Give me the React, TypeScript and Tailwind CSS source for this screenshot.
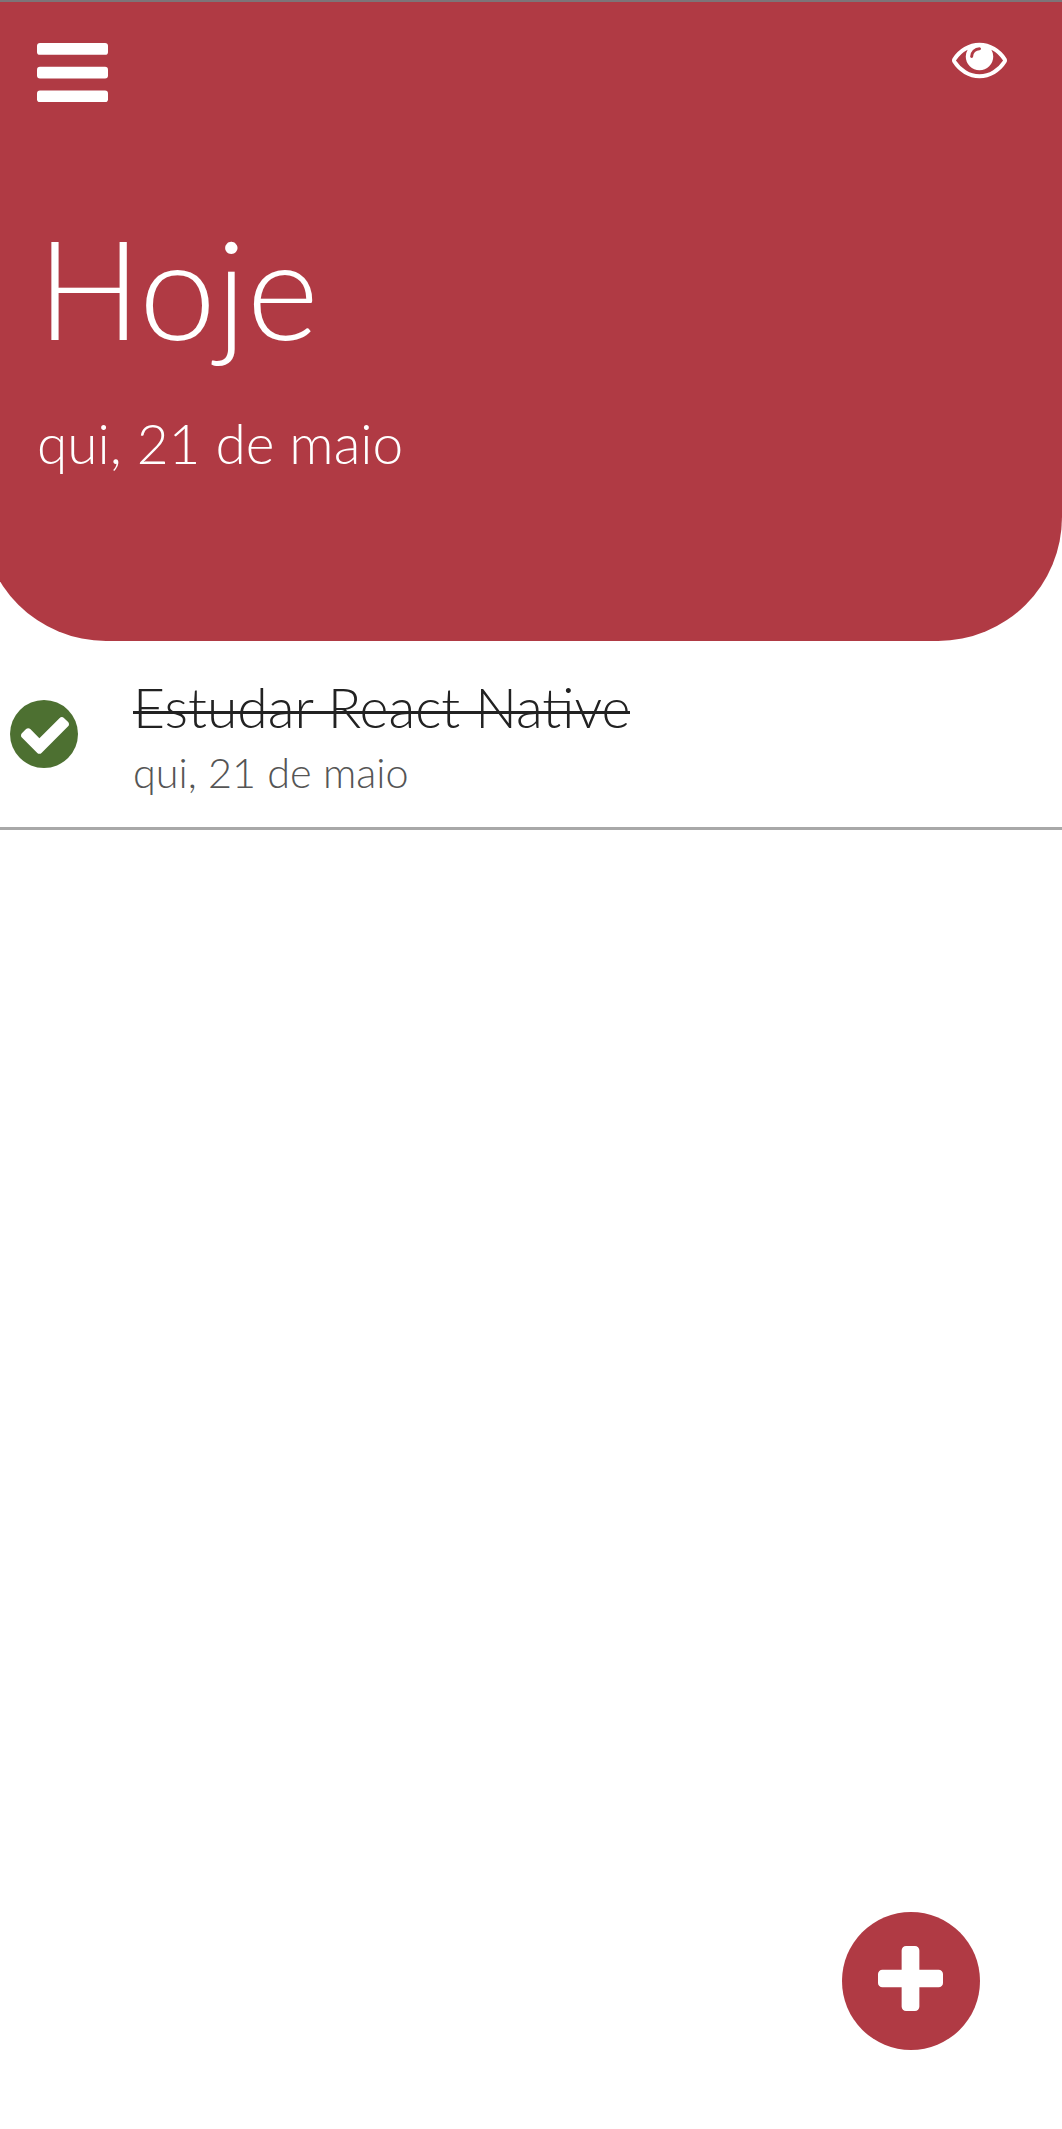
import React from "react";

function Bars() {
  return (
    <svg className="h-[59.25px] w-[71px]" viewBox="128 256 1536 1280" preserveAspectRatio="none" fill="currentColor">
      <rect x="128" y="256" width="1536" height="256" rx="64" />
      <rect x="128" y="768" width="1536" height="256" rx="64" />
      <rect x="128" y="1280" width="1536" height="256" rx="64" />
    </svg>
  );
}

function Eye() {
  return (
    <svg className="size-[55px]" viewBox="0 0 1792 1792" fill="currentColor">
      <path d="M1664 960q-152-236-381-353 61 104 61 225 0 185-131.5 316.5t-316.5 131.5-316.5-131.5-131.5-316.5q0-121 61-225-229 117-381 353 133 205 333.5 326.5t434.5 121.5 434.5-121.5 333.5-326.5zm-720-384q0-20-14-34t-34-14q-125 0-214.5 89.5t-89.5 214.5q0 20 14 34t34 14 34-14 14-34q0-86 61-147t147-61q20 0 34-14t14-34zm848 384q0 34-20 69-140 230-376.5 368.5t-499.5 138.5-499.5-139-376.5-368q-20-35-20-69t20-69q140-229 376.5-368t499.5-139 499.5 139 376.5 368q20 35 20 69z" />
    </svg>
  );
}

function Check() {
  return (
    <svg className="mt-[2px] ml-px h-[37px] w-[48px]" viewBox="121 338 1550 1184" fill="currentColor">
      <path d="M1671 566q0 40-28 68l-724 724-136 136q-28 28-68 28t-68-28l-136-136-362-362q-28-28-28-68t28-68l136-136q28-28 68-28t68 28l294 295 656-657q28-28 68-28t68 28l136 136q28 28 28 68z" />
    </svg>
  );
}

function Plus() {
  return (
    <svg className="mr-px mb-[6px] size-[65px]" viewBox="192 128 1408 1408" fill="currentColor">
      <path d="M1600 736v192q0 40-28 68t-68 28h-416v416q0 40-28 68t-68 28h-192q-40 0-68-28t-28-68v-416h-416q-40 0-68-28t-28-68v-192q0-40 28-68t68-28h416v-416q0-40 28-68t68-28h192q40 0 68 28t28 68v416h416q40 0 68 28t28 68z" />
    </svg>
  );
}

export default function App() {
  return (
    <div className="flex h-[2129px] w-[1062px] flex-col overflow-hidden bg-white font-['Lato',sans-serif] font-light">
      <header className="-ml-[18px] h-[641px] w-[1080px] shrink-0 rounded-b-[124px] bg-[#b03a44] text-white">
        <div className="h-[2px] bg-[#7d7478]" />
        <div className="px-[55px]">
          <div className="flex h-[100px] items-start justify-between pt-[28px]">
            <button className="mt-[12.5px]" aria-label="Menu"><Bars /></button>
            <button className="mt-[0.5px]" aria-label="Mostrar concluídas"><Eye /></button>
          </div>
          <h1 className="mt-[103px] text-[138px] leading-[164px]">Hoje</h1>
          <p className="mt-[41px] text-[55px] leading-[66px]">qui, 21 de maio</p>
        </div>
      </header>

      <main className="grow">
        <div className="flex h-[189px] items-start border-b-3 border-[#a8a8a8] pl-[10px]">
          <div className="mt-[59px] flex size-[68px] items-center justify-center rounded-full bg-[#4d7031] text-white">
            <Check />
          </div>
          <div className="mt-[33px] ml-[55px]">
            <h2 className="relative w-fit text-[55.25px] leading-[66px] text-[#222222]">
              Estudar React Native
              <span className="absolute inset-x-0 top-[36.7px] h-[3px] bg-[#222222]" />
            </h2>
            <p className="mt-[7px] text-[41.4px] leading-[50px] text-[#555555]">qui, 21 de maio</p>
          </div>
        </div>
      </main>

      <button
        className="mb-[79px] mr-[82px] flex size-[138px] shrink-0 items-center justify-center self-end rounded-full bg-[#b03a44] text-white"
        aria-label="Adicionar"
      >
        <Plus />
      </button>
    </div>
  );
}
